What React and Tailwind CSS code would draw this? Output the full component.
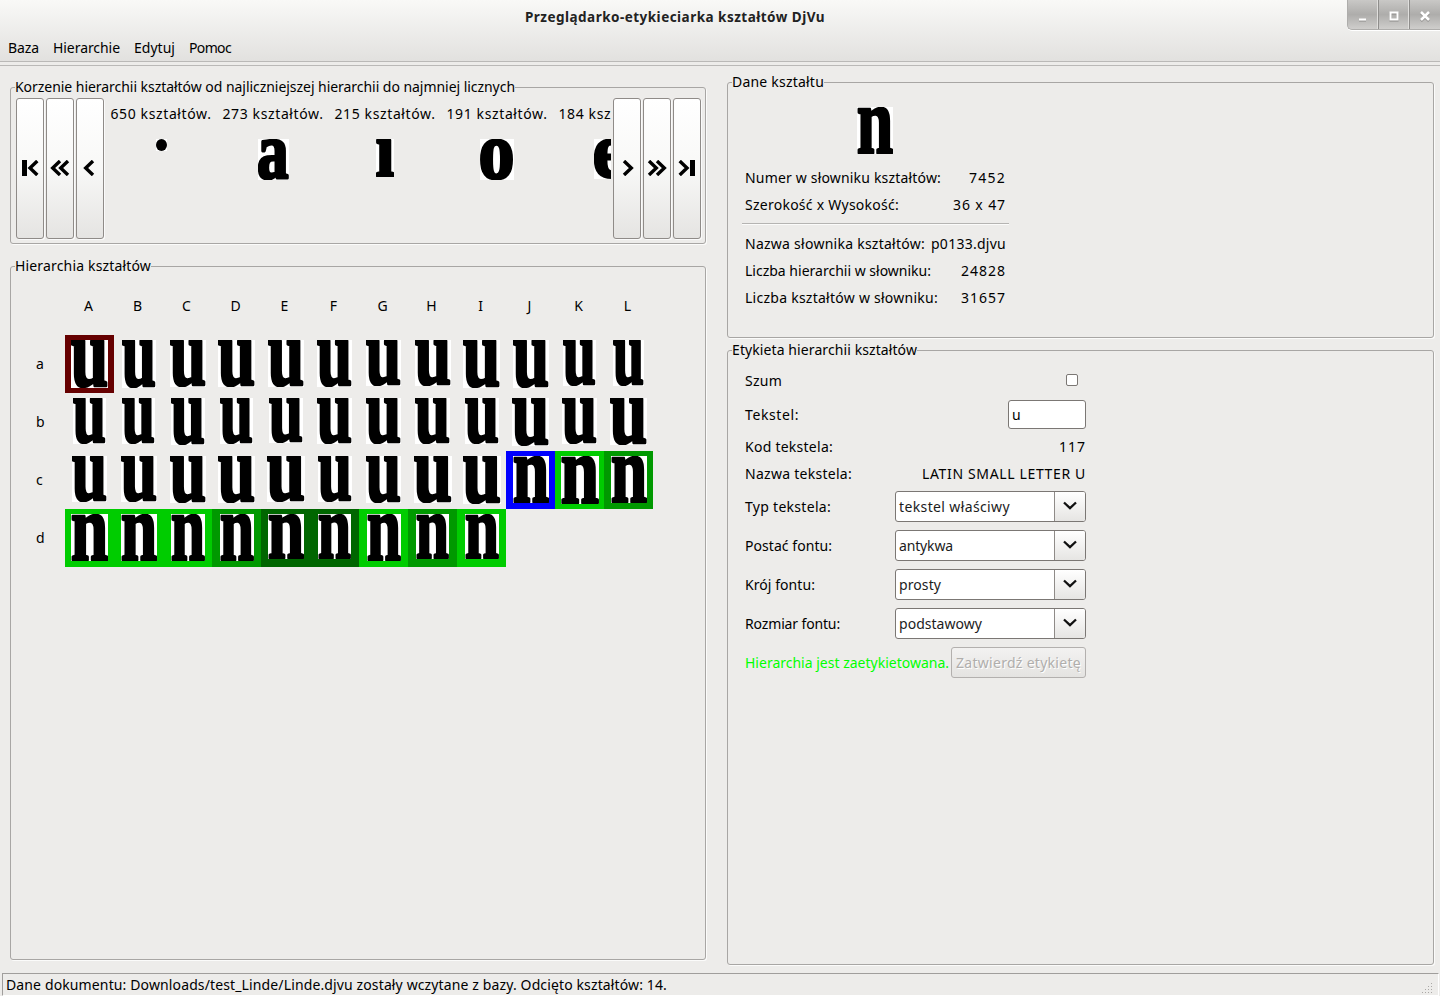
import { useLayoutEffect, useRef, useState } from "react";

// Text set to a given width by adjusting its letter spacing.
function Label({ w, children, className = "" }) {
  const ref = useRef(null);
  const [spacing, setSpacing] = useState(0);
  useLayoutEffect(() => {
    const natural = ref.current.getBoundingClientRect().width;
    setSpacing((w - natural) / String(children).length);
  }, []);
  return (
    <span ref={ref} className={`inline-block shrink-0 whitespace-pre ${className}`} style={{ letterSpacing: spacing }}>
      {children}
    </span>
  );
}

// Ink box of each letter in Liberation Serif Bold at 100px.
const INK = {
  u: [2, -46, 52, 47],
  n: [2, -47, 52, 47],
  a: [3, -47, 46, 48],
  ı: [2, -46, 24, 46],
  o: [3, -47, 45, 48],
  e: [3, -47, 39, 48],
};

function Shape({ ch, w, h, stroke = 3 }) {
  const [x, y, iw, ih] = INK[ch];
  const pad = 1;
  const sx = (w - 2 * pad) / iw;
  const sy = (h - 2 * pad) / ih;
  return (
    <svg width={w} height={h} className="block shrink-0 overflow-hidden bg-white">
      <text
        transform={`translate(${pad - x * sx} ${pad - y * sy}) scale(${sx} ${sy})`}
        className="fill-black stroke-black font-['Liberation_Serif',serif] text-[100px] font-bold"
        strokeWidth={stroke}
        strokeLinejoin="round"
      >
        {ch}
      </text>
    </svg>
  );
}

const ROWS = [
  ["a", [[37, 48, "M"], [34, 48], [36, 47], [37, 47], [36, 47], [35, 47], [35, 46], [36, 46], [37, 48], [36, 48], [33, 46], [31, 46]]],
  ["b", [[33, 46], [33, 46], [34, 47], [33, 46], [34, 45], [35, 46], [35, 46], [35, 46], [34, 46], [37, 48], [35, 46], [37, 47]]],
  ["c", [[35, 46], [36, 46], [36, 47], [37, 47], [38, 46], [34, 46], [35, 47], [38, 47], [38, 48], [36, 47, "B"], [38, 48, "1"], [36, 47, "2"]]],
  ["d", [[37, 47, "1"], [36, 47, "1"], [34, 47, "1"], [34, 47, "2"], [36, 45, "3"], [33, 45, "3"], [34, 47, "1"], [33, 45, "2"], [34, 45, "1"]]],
];
const CELL = { M: "bg-[#660000]", B: "bg-[#0000ff]", 1: "bg-[#00cc00]", 2: "bg-[#009900]", 3: "bg-[#006600]" };

const ROOTS = [
  ["650", null],
  ["273", ["a", 31, 41]],
  ["215", ["ı", 18, 38]],
  ["191", ["o", 34, 41]],
  ["184", ["e", 31, 40]],
];

const ARROWS = {
  first: ["M17.3 1 10 8l7.3 7", true],
  back2: ["M10 1 2.7 8l7.3 7M18 1 10.7 8l7.3 7"],
  back: ["M13 1 5.7 8l7.3 7"],
};

function NavButton({ kind, flip }) {
  const [d, bar] = ARROWS[kind];
  return (
    <button className="flex h-[141px] w-7 shrink-0 items-center justify-center rounded-[3px] border border-[#8f8b88] bg-gradient-to-b from-white via-[#f8f8f7] to-[#e5e4e2] shadow-[1px_1px_0_#fafafa]">
      <svg width="20" height="16" viewBox="0 0 20 16" className={flip ? "-mt-px -scale-x-100" : "-mt-px"}>
        <path d={d} fill="none" stroke="#000" strokeWidth="3.4" />
        {bar && <path d="M2 0h5v16H2z" />}
      </svg>
    </button>
  );
}

function Group({ title, w, className, children }) {
  return (
    <fieldset className={`min-w-0 rounded-[3px] border border-[#a8a6a4] shadow-[1px_1px_0_#fbfbfa] ${className}`}>
      <legend className="ml-1 h-5 bg-[#edecea] leading-5">
        <Label w={w}>{title}</Label>
      </legend>
      {children}
    </fieldset>
  );
}

function InfoRow({ label, lw, value, vw, className = "" }) {
  return (
    <div className={`flex h-[27px] items-center justify-between ${className}`}>
      <Label w={lw}>{label}</Label>
      <Label w={vw}>{value}</Label>
    </div>
  );
}

function ComboRow({ label, lw, value, vw }) {
  return (
    <div className="mb-2 flex h-[31px] items-center justify-between">
      <Label w={lw}>{label}</Label>
      <div className="flex h-[31px] w-[191px] overflow-hidden rounded-[3px] border border-[#7b7774] bg-white">
        <div className="flex flex-1 items-center pl-[3px] text-[#1c1c1c]">
          <Label w={vw}>{value}</Label>
        </div>
        <div className="flex w-[31px] items-center justify-center border-l border-[#8f8b88] bg-gradient-to-b from-white to-[#e6e5e3]">
          <svg width="14" height="9" viewBox="0 0 14 9" className="-mt-0.5">
            <path d="M1 1.5 7 7.2 13 1.5" fill="none" stroke="#111" strokeWidth="2.3" />
          </svg>
        </div>
      </div>
    </div>
  );
}

export default function App() {
  return (
    <div className="flex h-[996px] w-[1440px] flex-col overflow-hidden bg-[#edecea] font-['Noto_Sans',sans-serif] text-[14px] leading-5 text-black">
      <header className="flex h-[66px] shrink-0 flex-col">
        <div className="h-[62px] border-b border-[#bab9b7] bg-gradient-to-b from-[#f9f9f7] to-[#e2e1df]">
          <div className="flex h-[38px] justify-between">
            <div className="flex h-[34px] items-center pl-[525px]">
              <Label w={300} className="text-[13.5px] font-bold text-[#222]">Przeglądarko-etykieciarka kształtów DjVu</Label>
            </div>
            <div className="flex h-[30px] w-[93px] rounded-bl-[5px] border-b border-l border-[#aeadab] bg-gradient-to-b from-[#c9c8c6] via-[#aeadab] to-[#cfcecc] shadow-[0_1px_0_#fff]">
              <div className="flex w-[30px] items-center justify-center border-r border-[#e0dfdd]">
                <svg width="10" height="10" className="mt-1 -ml-0.5"><path d="M2 9h7" stroke="#8c8b89" /><path d="M2 7.5h7" stroke="#fff" strokeWidth="2" /></svg>
              </div>
              <div className="flex w-[31px] items-center justify-center border-l border-r border-l-[#8f8e8c] border-r-[#e0dfdd]">
                <svg width="10" height="11" className="mt-[3px]"><path d="M1.5 2.5h7v7h-7z" fill="none" stroke="#8c8b89" strokeWidth="2" /><path d="M1.5 1.5h7v7h-7z" fill="none" stroke="#fff" strokeWidth="2" /></svg>
              </div>
              <div className="flex w-[31px] items-center justify-center border-l border-[#8f8e8c]">
                <svg width="10" height="11" className="mt-[3px]"><path d="m1 2 8 8m0-8-8 8" stroke="#8c8b89" strokeWidth="2.5" /><path d="m1 1 8 8m0-8-8 8" stroke="#fff" strokeWidth="2.5" /></svg>
              </div>
            </div>
          </div>
          <nav className="flex h-5 items-center gap-[14px] pl-2">
            <Label w={31}>Baza</Label>
            <Label w={67}>Hierarchie</Label>
            <Label w={41}>Edytuj</Label>
            <Label w={42}>Pomoc</Label>
          </nav>
        </div>
        <div className="h-1 border-b border-[#bab9b7]" />
      </header>

      <main className="flex h-[907px] shrink-0 pl-2.5">
        <section className="flex w-[696px] flex-col pt-[11px]">
          <Group title="Korzenie hierarchii kształtów od najliczniejszej hierarchii do najmniej licznych" w={500} className="h-[167px]">
            <div className="flex gap-0.5 pt-px pl-[5px]">
              <NavButton kind="first" />
              <NavButton kind="back2" />
              <NavButton kind="back" />
              <div className="-ml-px flex w-[506px] overflow-hidden">
                {ROOTS.map(([count, shape]) => (
                  <div key={count} className="flex w-28 shrink-0 flex-col items-center pt-1.5">
                    <Label w={101}>{count + " kształtów."}</Label>
                    <div className="mt-[15px]">
                      {shape ? (
                        <Shape ch={shape[0]} w={shape[1]} h={shape[2]} stroke={4} />
                      ) : (
                        <svg width="11" height="12" className="block bg-white"><ellipse cx="5.5" cy="6" rx="5.5" ry="6" /></svg>
                      )}
                    </div>
                  </div>
                ))}
              </div>
              <NavButton kind="back" flip />
              <NavButton kind="back2" flip />
              <NavButton kind="first" flip />
            </div>
          </Group>

          <Group title="Hierarchia kształtów" w={136} className="mt-3 h-[704px]">
            <div className="flex pt-5 pl-[54px]">
              {"ABCDEFGHIJKL".split("").map((c) => (
                <div key={c} className="w-[49px] pr-0.5 text-center">{c}</div>
              ))}
            </div>
            <div className="mt-[19px] flex flex-col">
              {ROWS.map(([name, cells], r) => (
                <div key={name} className="flex h-[58px]">
                  <div className="flex w-[54px] items-center pl-[25px]">{name}</div>
                  {cells.map(([w, h, tone], i) => (
                    <div key={i} className={`flex w-[49px] justify-center pt-[5px] ${tone ? CELL[tone] : ""}`}>
                      <Shape ch={r === 3 || (r === 2 && i > 8) ? "n" : "u"} w={w} h={h} />
                    </div>
                  ))}
                </div>
              ))}
            </div>
          </Group>
        </section>

        <section className="ml-[21px] flex w-[707px] flex-col pt-1.5">
          <Group title="Dane kształtu" w={92} className="h-[266px]">
            <div className="w-[295px] px-3.5">
              <div className="flex h-[73px] justify-center pt-[15px]">
                <div className="pr-0.5"><Shape ch="n" w={36} h={47} /></div>
              </div>
              <div className="-mt-px ml-[3px]">
                <div className="mr-[3px]">
                  <InfoRow label="Numer w słowniku kształtów:" lw={196} value="7452" vw={37} />
                  <InfoRow label="Szerokość x Wysokość:" lw={154} value="36 x 47" vw={53} />
                </div>
                <div className="my-[5px] -ml-[3px] h-0.5 border-b border-[#fbfbfa] bg-[#b5b4b2]" />
                <div className="mr-[3px]">
                  <InfoRow label="Nazwa słownika kształtów:" lw={180} value="p0133.djvu" vw={75} />
                  <InfoRow label="Liczba hierarchii w słowniku:" lw={186} value="24828" vw={45} />
                  <InfoRow label="Liczba kształtów w słowniku:" lw={193} value="31657" vw={45} />
                </div>
              </div>
            </div>
          </Group>

          <Group title="Etykieta hierarchii kształtów" w={185} className="mt-0.5 h-[625px]">
            <div className="ml-[17px] w-[341px] pt-[7px]">
              <div className="flex h-[27px] items-center justify-between pr-2">
                <Label w={37}>Szum</Label>
                <div className="-mt-0.5 h-3 w-3 rounded-[2px] border border-[#7b7774] bg-white" />
              </div>
              <div className="mt-1.5 flex h-[29px] items-center justify-between">
                <Label w={54}>Tekstel:</Label>
                <div className="flex h-[29px] w-[78px] items-center rounded-[3px] border border-[#7b7774] bg-white pl-[3px]">u</div>
              </div>
              <div className="mt-1">
                <InfoRow label="Kod tekstela:" lw={88} value="117" vw={27} />
                <InfoRow label="Nazwa tekstela:" lw={107} value="LATIN SMALL LETTER U" vw={164} />
              </div>
              <div className="mt-1">
                <ComboRow label="Typ tekstela:" lw={86} value="tekstel właściwy" vw={111} />
                <ComboRow label="Postać fontu:" lw={87} value="antykwa" vw={54} />
                <ComboRow label="Krój fontu:" lw={70} value="prosty" vw={42} />
                <ComboRow label="Rozmiar fontu:" lw={95} value="podstawowy" vw={83} />
              </div>
              <div className="flex h-[31px] items-center justify-between">
                <Label w={204} className="text-[#00ff00]">Hierarchia jest zaetykietowana.</Label>
                <button className="flex h-[31px] w-[135px] items-center justify-center rounded-[3px] border border-[#b3b0ae] bg-gradient-to-b from-[#f3f2f1] to-[#e4e3e1] text-[#b0aeac] [text-shadow:1px_1px_0_#fff]">
                  <Label w={125}>Zatwierdź etykietę</Label>
                </button>
              </div>
            </div>
          </Group>
        </section>
      </main>

      <footer className="ml-0.5 flex h-[23px] w-[1437px] shrink-0 items-center justify-between border-t border-r border-b border-l border-t-[#a09e9c] border-r-white border-b-white border-l-[#a09e9c] pl-[3px]">
        <Label w={661}>Dane dokumentu: Downloads/test_Linde/Linde.djvu zostały wczytane z bazy. Odcięto kształtów: 14.</Label>
        <svg width="12" height="12" className="mt-2 mr-1" fill="#aaa8a6">
          {[0, 1, 2, 3].map((r) =>
            Array.from({ length: r + 1 }, (_, c) => <rect key={r + "-" + c} x={9 - c * 3} y={r * 3} width="1" height="1" />)
          )}
        </svg>
      </footer>
    </div>
  );
}
